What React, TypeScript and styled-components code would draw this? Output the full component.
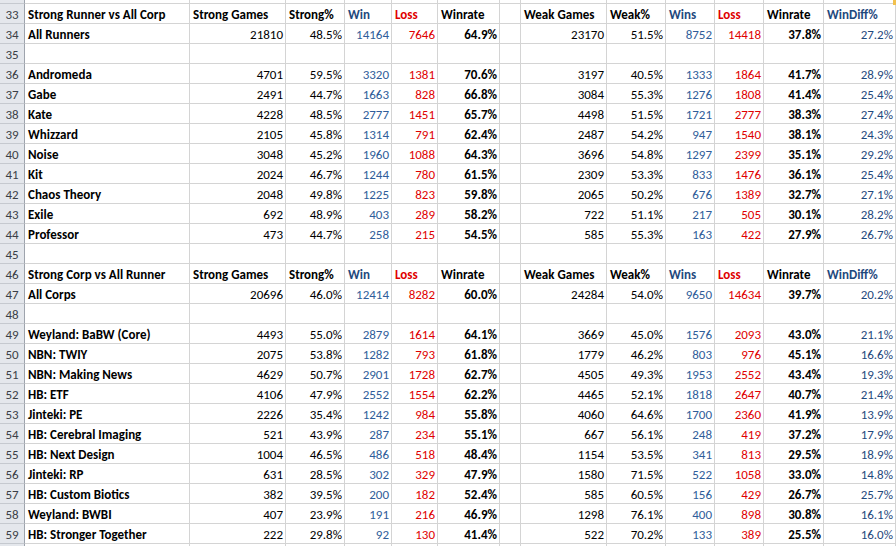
import React from "react";
import styled, { createGlobalStyle } from "styled-components";

const Global = createGlobalStyle`
  html, body { margin: 0; padding: 0; background: #ffffff; overflow: hidden; }
  body { font-family: Calibri, Carlito, "Liberation Sans", Arial, sans-serif; }
`;

const COLS = "25px 165px 96px 59px 47px 46px 62px 21px 86px 59px 49px 49px 60px 72px 1fr";

const Sheet = styled.div`
  width: 896px;
  height: 546px;
  overflow: hidden;
  position: relative;
  display: flex;
  flex-direction: column;
`;

const Row = styled.div<{ $h?: number }>`
  display: grid;
  grid-template-columns: ${COLS};
  height: ${(p) => p.$h ?? 20}px;
  flex: none;
`;

const RowNum = styled.div`
  background: #e4e7ec;
  border-right: 1px solid #9ea4ad;
  border-bottom: 1px solid #c5c9cf;
  color: #3b3f46;
  font-size: 13px;
  display: flex;
  align-items: flex-end;
  justify-content: center;
  padding-bottom: 0;
  line-height: 16px;
  box-sizing: border-box;
`;

type Tone = "black" | "blue" | "red" | "navy";
const TONES: Record<Tone, string> = {
  black: "#000000",
  blue: "#2f5d9a",
  red: "#e00000",
  navy: "#1f497d",
};

const Cell = styled.div<{ $right?: boolean; $tone?: Tone; $bold?: boolean }>`
  border-right: 1px solid #d4d4d4;
  border-bottom: 1px solid #d4d4d4;
  box-sizing: border-box;
  display: flex;
  align-items: flex-end;
  justify-content: ${(p) => (p.$right ? "flex-end" : "flex-start")};
  padding: 0 2px 0 3px;
  font-size: 13px;
  line-height: 16px;
  white-space: nowrap;
  overflow: visible;
  color: ${(p) => TONES[p.$tone ?? "black"]};
  font-weight: ${(p) => (p.$bold ? 700 : 400)};
  min-width: 0;
`;

const Corner = styled.div`
  position: absolute;
  top: 0;
  right: 0;
  width: 3px;
  height: 5px;
  background: #f2c14e;
`;

type DataRow = [string, number, string, number, number, string, number, string, number, number, string, string];

const HEADERS: [string, Tone][] = [
  ["Strong Games", "black"],
  ["Strong%", "black"],
  ["Win", "navy"],
  ["Loss", "red"],
  ["Winrate", "black"],
  ["", "black"],
  ["Weak Games", "black"],
  ["Weak%", "black"],
  ["Wins", "navy"],
  ["Loss", "red"],
  ["Winrate", "black"],
  ["WinDiff%", "navy"],
];

type Line =
  | { n: number; kind: "head"; title: string }
  | { n: number; kind: "data"; d: DataRow }
  | { n: number; kind: "empty" };

const runners: DataRow[] = [
  ["Andromeda", 4701, "59.5%", 3320, 1381, "70.6%", 3197, "40.5%", 1333, 1864, "41.7%", "28.9%"],
  ["Gabe", 2491, "44.7%", 1663, 828, "66.8%", 3084, "55.3%", 1276, 1808, "41.4%", "25.4%"],
  ["Kate", 4228, "48.5%", 2777, 1451, "65.7%", 4498, "51.5%", 1721, 2777, "38.3%", "27.4%"],
  ["Whizzard", 2105, "45.8%", 1314, 791, "62.4%", 2487, "54.2%", 947, 1540, "38.1%", "24.3%"],
  ["Noise", 3048, "45.2%", 1960, 1088, "64.3%", 3696, "54.8%", 1297, 2399, "35.1%", "29.2%"],
  ["Kit", 2024, "46.7%", 1244, 780, "61.5%", 2309, "53.3%", 833, 1476, "36.1%", "25.4%"],
  ["Chaos Theory", 2048, "49.8%", 1225, 823, "59.8%", 2065, "50.2%", 676, 1389, "32.7%", "27.1%"],
  ["Exile", 692, "48.9%", 403, 289, "58.2%", 722, "51.1%", 217, 505, "30.1%", "28.2%"],
  ["Professor", 473, "44.7%", 258, 215, "54.5%", 585, "55.3%", 163, 422, "27.9%", "26.7%"],
];

const corps: DataRow[] = [
  ["Weyland: BaBW (Core)", 4493, "55.0%", 2879, 1614, "64.1%", 3669, "45.0%", 1576, 2093, "43.0%", "21.1%"],
  ["NBN: TWIY", 2075, "53.8%", 1282, 793, "61.8%", 1779, "46.2%", 803, 976, "45.1%", "16.6%"],
  ["NBN: Making News", 4629, "50.7%", 2901, 1728, "62.7%", 4505, "49.3%", 1953, 2552, "43.4%", "19.3%"],
  ["HB: ETF", 4106, "47.9%", 2552, 1554, "62.2%", 4465, "52.1%", 1818, 2647, "40.7%", "21.4%"],
  ["Jinteki: PE", 2226, "35.4%", 1242, 984, "55.8%", 4060, "64.6%", 1700, 2360, "41.9%", "13.9%"],
  ["HB: Cerebral Imaging", 521, "43.9%", 287, 234, "55.1%", 667, "56.1%", 248, 419, "37.2%", "17.9%"],
  ["HB: Next Design", 1004, "46.5%", 486, 518, "48.4%", 1154, "53.5%", 341, 813, "29.5%", "18.9%"],
  ["Jinteki: RP", 631, "28.5%", 302, 329, "47.9%", 1580, "71.5%", 522, 1058, "33.0%", "14.8%"],
  ["HB: Custom Biotics", 382, "39.5%", 200, 182, "52.4%", 585, "60.5%", 156, 429, "26.7%", "25.7%"],
  ["Weyland: BWBI", 407, "23.9%", 191, 216, "46.9%", 1298, "76.1%", 400, 898, "30.8%", "16.1%"],
  ["HB: Stronger Together", 222, "29.8%", 92, 130, "41.4%", 522, "70.2%", 133, 389, "25.5%", "16.0%"],
];

const lines: Line[] = [
  { n: 33, kind: "head", title: "Strong Runner vs All Corp" },
  { n: 34, kind: "data", d: ["All Runners", 21810, "48.5%", 14164, 7646, "64.9%", 23170, "51.5%", 8752, 14418, "37.8%", "27.2%"] },
  { n: 35, kind: "empty" },
  ...runners.map((d, i) => ({ n: 36 + i, kind: "data" as const, d })),
  { n: 45, kind: "empty" },
  { n: 46, kind: "head", title: "Strong Corp vs All Runner" },
  { n: 47, kind: "data", d: ["All Corps", 20696, "46.0%", 12414, 8282, "60.0%", 24284, "54.0%", 9650, 14634, "39.7%", "20.2%"] },
  { n: 48, kind: "empty" },
  ...corps.map((d, i) => ({ n: 49 + i, kind: "data" as const, d })),
];

const EmptyCells: React.FC<{ count: number }> = ({ count }) => (
  <>
    {Array.from({ length: count }).map((_, i) => (
      <Cell key={i} />
    ))}
  </>
);

const HeadRow: React.FC<{ n: number; title: string }> = ({ n, title }) => (
  <Row>
    <RowNum>{n}</RowNum>
    <Cell $bold>{title}</Cell>
    {HEADERS.map(([t, tone], i) => (
      <Cell key={i} $bold $tone={tone}>
        {t}
      </Cell>
    ))}
    <Cell />
  </Row>
);

const DataLine: React.FC<{ n: number; d: DataRow }> = ({ n, d }) => {
  const [name, sg, sp, w, l, wr, wg, wp, ws, wl, wwr, diff] = d;
  return (
    <Row>
      <RowNum>{n}</RowNum>
      <Cell $bold>{name}</Cell>
      <Cell $right>{sg}</Cell>
      <Cell $right>{sp}</Cell>
      <Cell $right $tone="blue">{w}</Cell>
      <Cell $right $tone="red">{l}</Cell>
      <Cell $right $bold>{wr}</Cell>
      <Cell />
      <Cell $right>{wg}</Cell>
      <Cell $right>{wp}</Cell>
      <Cell $right $tone="blue">{ws}</Cell>
      <Cell $right $tone="red">{wl}</Cell>
      <Cell $right $bold>{wwr}</Cell>
      <Cell $right $tone="navy">{diff}</Cell>
      <Cell />
    </Row>
  );
};

export default function App() {
  return (
    <Sheet>
      <Global />
      <Row $h={4}>
        <RowNum />
        <EmptyCells count={14} />
      </Row>
      {lines.map((ln) => {
        if (ln.kind === "head") return <HeadRow key={ln.n} n={ln.n} title={ln.title} />;
        if (ln.kind === "data") return <DataLine key={ln.n} n={ln.n} d={ln.d} />;
        return (
          <Row key={ln.n}>
            <RowNum>{ln.n}</RowNum>
            <EmptyCells count={14} />
          </Row>
        );
      })}
      <Row>
        <RowNum />
        <EmptyCells count={14} />
      </Row>
      <Corner />
    </Sheet>
  );
}
